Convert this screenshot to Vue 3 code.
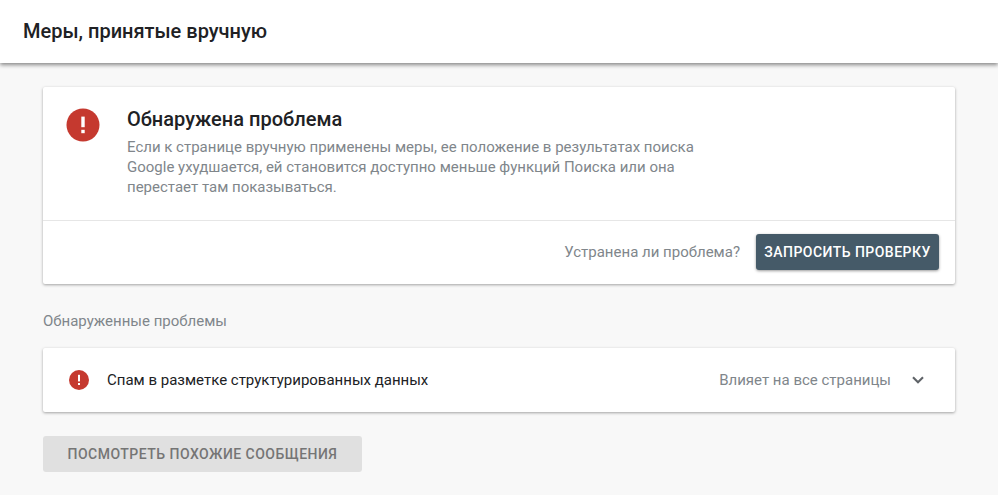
<script setup>
const lines = [
  'Если к странице вручную применены меры, ее положение в результатах поиска',
  'Google ухудшается, ей становится доступно меньше функций Поиска или она',
  'перестает там показываться.'
]
</script>

<template>
  <div class="page">
    <header class="top">
      <h1 class="title">Меры, принятые вручную</h1>
    </header>
    <main class="content">
      <section class="card">
        <div class="summary">
          <svg class="icon-large" viewBox="0 0 34 34" aria-hidden="true">
            <circle cx="17" cy="17" r="16.5" fill="#c5392f" />
            <rect x="15.3" y="8.6" width="3.4" height="10.6" fill="#fff" />
            <rect x="15.3" y="21.8" width="3.4" height="3.4" fill="#fff" />
          </svg>
          <div class="summary-text">
            <h2 class="heading">Обнаружена проблема</h2>
            <p v-for="line in lines" :key="line" class="line">{{ line }}</p>
          </div>
        </div>
        <div class="actions">
          <span class="question">Устранена ли проблема?</span>
          <button class="btn-primary" type="button">ЗАПРОСИТЬ ПРОВЕРКУ</button>
        </div>
      </section>

      <div class="section-label">Обнаруженные проблемы</div>

      <section class="card issue">
        <svg class="icon-small" viewBox="0 0 20 20" aria-hidden="true">
          <circle cx="10" cy="10" r="10" fill="#c5392f" />
          <rect x="9" y="4.8" width="2" height="6.6" fill="#fff" />
          <rect x="9" y="13" width="2" height="2" fill="#fff" />
        </svg>
        <span class="issue-name">Спам в разметке структурированных данных</span>
        <span class="issue-scope">Влияет на все страницы</span>
        <svg class="chevron" viewBox="0 0 12 8" aria-hidden="true">
          <path d="M1 1.2 6 6.2 11 1.2" fill="none" stroke="#5f6368" stroke-width="2.1" />
        </svg>
      </section>

      <button class="btn-muted" type="button">ПОСМОТРЕТЬ ПОХОЖИЕ СООБЩЕНИЯ</button>
    </main>
  </div>
</template>

<style>
html, body {
  margin: 0;
  background: #f8f8f8;
}
</style>

<style scoped>
.page {
  width: 998px;
  height: 495px;
  overflow: hidden;
  background: #f8f8f8;
  font-family: Roboto, "Noto Sans", sans-serif;
}
.top {
  height: 63px;
  background: #fff;
  box-shadow: 0 2px 4px rgba(0, 0, 0, 0.45);
  display: flex;
  align-items: center;
  padding-left: 23px;
  position: relative;
}
.title {
  margin: 0;
  font-size: 20px;
  font-weight: 500;
  color: #202124;
  position: relative;
  top: -1px;
}
.content {
  padding: 24px 43px 0;
}
.card {
  width: 912px;
  background: #fff;
  border-radius: 2px;
  box-shadow: 0 1px 3px rgba(0, 0, 0, 0.35);
}
.summary {
  height: 134px;
  display: flex;
  align-items: flex-start;
  padding: 21px 0 0 23px;
  box-sizing: border-box;
  border-bottom: 1px solid #e6e6e6;
}
.icon-large {
  width: 34px;
  height: 34px;
  flex: none;
}
.summary-text {
  margin-left: 27px;
}
.heading {
  margin: -1px 0 6px;
  font-size: 20px;
  line-height: 24px;
  font-weight: 500;
  color: #202124;
}
.line {
  margin: 0;
  font-size: 15px;
  line-height: 20px;
  color: #80868b;
}
.actions {
  height: 63px;
  display: flex;
  align-items: flex-start;
  justify-content: flex-end;
  padding: 13px 16px 0 0;
  box-sizing: border-box;
}
.question {
  font-size: 15px;
  line-height: 36px;
  color: #80868b;
  margin-right: 16px;
}
.btn-primary {
  width: 183px;
  height: 36px;
  border: 0;
  border-radius: 3px;
  background: #455a68;
  color: #fff;
  font: 500 14px Roboto, sans-serif;
  letter-spacing: 0.46px;
  box-shadow: 0 1px 3px rgba(0, 0, 0, 0.4);
  padding: 0;
}
.section-label {
  margin-top: 28px;
  height: 18px;
  line-height: 18px;
  font-size: 15px;
  color: #80868b;
}
.issue {
  margin-top: 18px;
  height: 64px;
  display: flex;
  align-items: center;
  padding: 0 31px 0 26px;
  box-sizing: border-box;
}
.icon-small {
  width: 20px;
  height: 20px;
  flex: none;
}
.issue-name {
  margin-left: 18px;
  font-size: 15px;
  color: #202124;
}
.issue-scope {
  margin-left: auto;
  font-size: 15px;
  color: #80868b;
}
.chevron {
  width: 12px;
  height: 8px;
  margin-left: 21px;
}
.btn-muted {
  display: block;
  margin-top: 24px;
  width: 319px;
  height: 36px;
  border: 0;
  border-radius: 3px;
  background: #e0e0e0;
  color: #757575;
  font: 500 14px Roboto, sans-serif;
  letter-spacing: 0.48px;
  padding: 0;
}
</style>
